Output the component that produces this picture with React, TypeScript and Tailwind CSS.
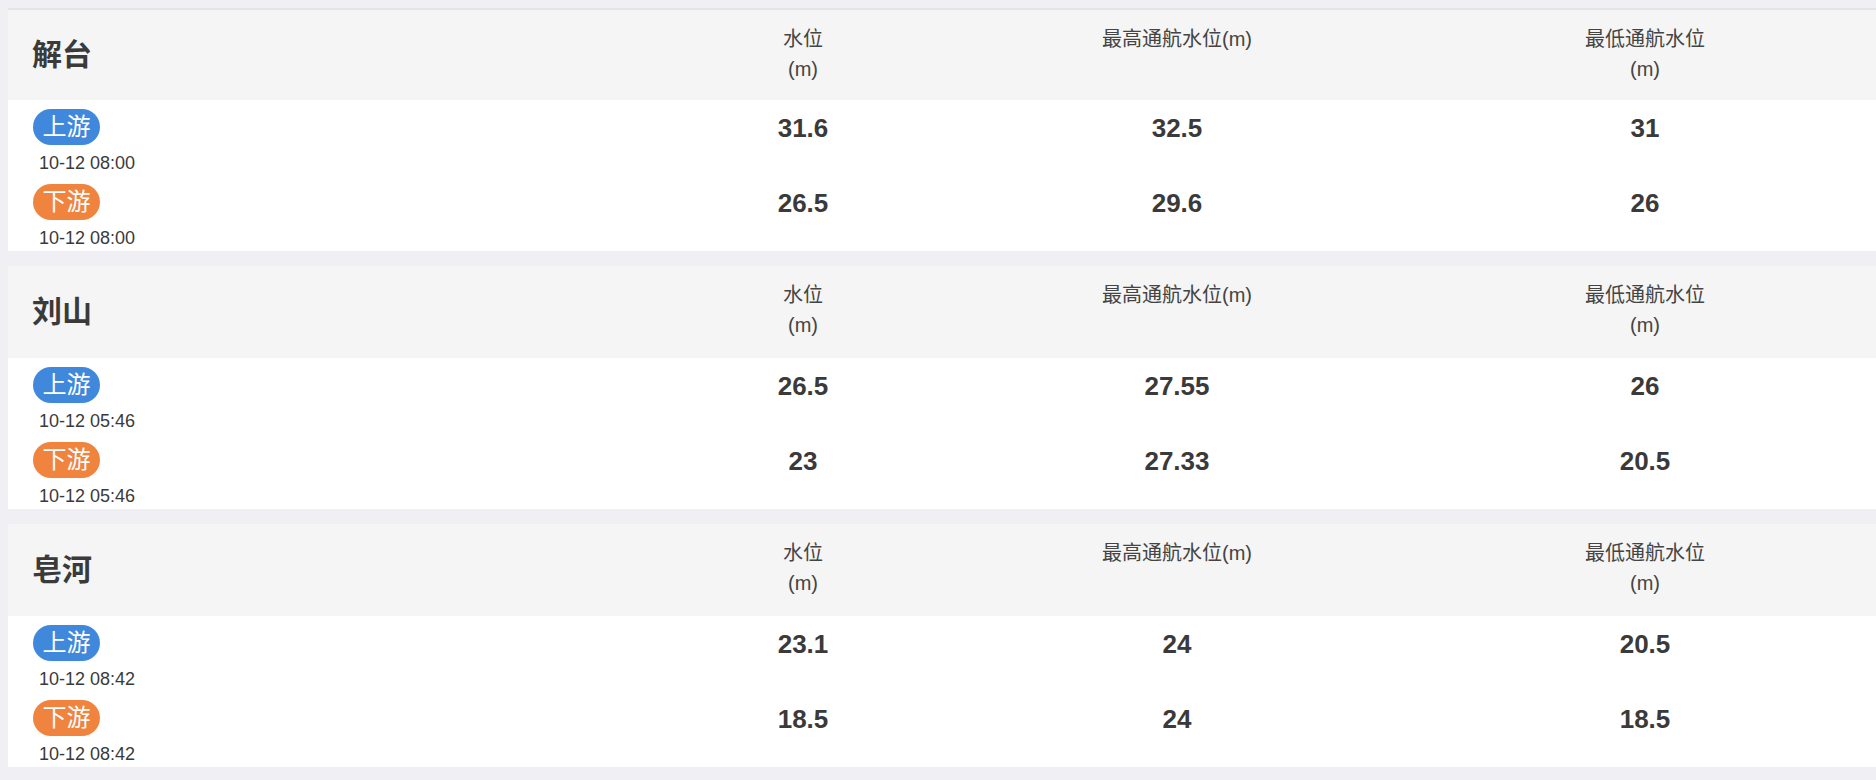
import React from "react"

interface Reading {
  time: string
  level: string
  high: string
  low: string
}

interface Station {
  name: string
  up: Reading
  down: Reading
}

const stations: Station[] = [
  {
    name: "解台",
    up: { time: "10-12 08:00", level: "31.6", high: "32.5", low: "31" },
    down: { time: "10-12 08:00", level: "26.5", high: "29.6", low: "26" },
  },
  {
    name: "刘山",
    up: { time: "10-12 05:46", level: "26.5", high: "27.55", low: "26" },
    down: { time: "10-12 05:46", level: "23", high: "27.33", low: "20.5" },
  },
  {
    name: "皂河",
    up: { time: "10-12 08:42", level: "23.1", high: "24", low: "20.5" },
    down: { time: "10-12 08:42", level: "18.5", high: "24", low: "18.5" },
  },
]

const font = "font-['Liberation_Sans','Noto_Sans_CJK_SC',sans-serif]"
const cols = "grid grid-cols-[658px_274px_474px_462px]"

function Row({ label, reading, up }: { label: string; reading: Reading; up: boolean }) {
  return (
    <div className={cols}>
      <div className="flex flex-col items-start pl-[25px]">
        <span
          className={
            "flex h-[36px] w-[67px] items-center justify-center rounded-full text-[24px] leading-none text-white " +
            (up ? "bg-[#3f88dc]" : "bg-[#f0843e]")
          }
        >
          {label}
        </span>
        <span className="mt-[6px] pl-[6px] text-[18px] leading-[24px] text-[#3a3a3a]">
          {reading.time}
        </span>
      </div>
      <div className="h-[36px] pt-[1px] text-center text-[26px] font-bold leading-[36px] text-[#3a3a3a]">
        {reading.level}
      </div>
      <div className="h-[36px] pt-[1px] text-center text-[26px] font-bold leading-[36px] text-[#3a3a3a]">
        {reading.high}
      </div>
      <div className="h-[36px] pt-[1px] text-center text-[26px] font-bold leading-[36px] text-[#3a3a3a]">
        {reading.low}
      </div>
    </div>
  )
}

function StationCard({ station, first }: { station: Station; first: boolean }) {
  return (
    <div className="bg-white">
      <div
        className={
          cols +
          " h-[92px] bg-[#f5f5f5] " +
          (first ? "border-t-2 border-[#e4e4e8]" : "")
        }
      >
        <div className="flex items-center pb-[2px] pl-[24px]">
          <h2 className="text-[30px] font-bold text-[#3a3a3a]">{station.name}</h2>
        </div>
        <div className="pt-[14px] text-center text-[20px] leading-[30px] text-[#444]">
          <p>水位</p>
          <p>(m)</p>
        </div>
        <div className="pt-[14px] text-center text-[20px] leading-[30px] text-[#444]">
          <p>最高通航水位(m)</p>
        </div>
        <div className="pt-[14px] text-center text-[20px] leading-[30px] text-[#444]">
          <p>最低通航水位</p>
          <p>(m)</p>
        </div>
      </div>
      <div className="flex h-[151px] flex-col gap-[9px] pt-[9px]">
        <Row label="上游" reading={station.up} up />
        <Row label="下游" reading={station.down} up={false} />
      </div>
    </div>
  )
}

export default function App() {
  return (
    <div className={"min-h-screen overflow-hidden bg-[#efeff4] pl-2 pt-2 " + font}>
      <div className="flex flex-col gap-[15px]">
        {stations.map((s, i) => (
          <StationCard key={s.name} station={s} first={i === 0} />
        ))}
      </div>
    </div>
  )
}
